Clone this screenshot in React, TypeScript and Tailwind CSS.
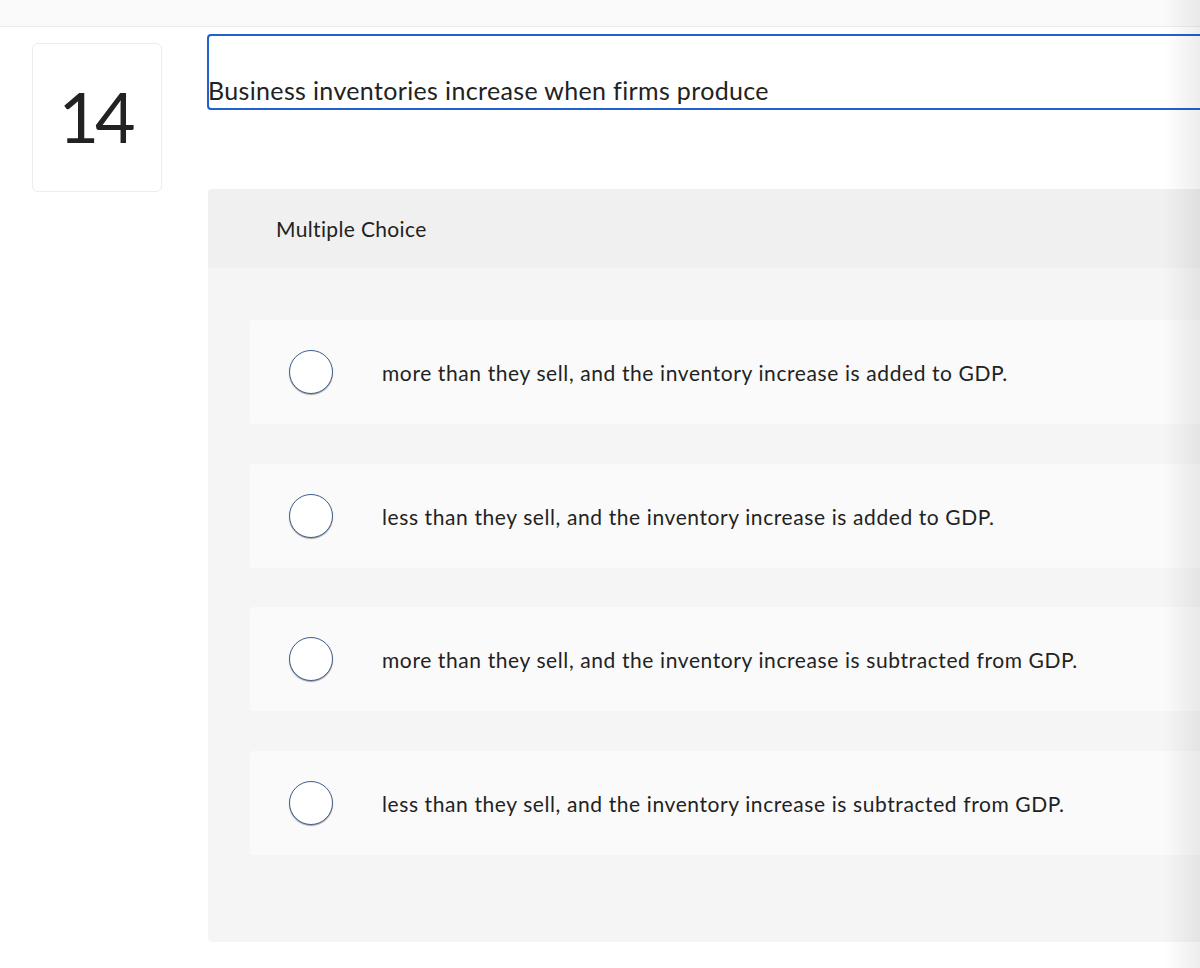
import React from "react";

const options = [
  "more than they sell, and the inventory increase is added to GDP.",
  "less than they sell, and the inventory increase is added to GDP.",
  "more than they sell, and the inventory increase is subtracted from GDP.",
  "less than they sell, and the inventory increase is subtracted from GDP.",
];

export default function App() {
  return (
    <div
      className="relative w-[1200px] h-[968px] overflow-hidden bg-white text-[#222]"
      style={{ fontFamily: "Lato, 'Open Sans', sans-serif" }}
    >
      <div className="h-[27px] bg-[#fafafa] border-b border-[#ececec]" />
      <div className="flex pt-[7px]">
        <div className="w-[208px] shrink-0 pl-[32px] pt-[9px]">
          <div className="w-[130px] h-[149px] rounded-[6px] border border-[#ececec] flex items-center justify-center">
            <span className="text-[70px] leading-none tracking-[-4px] text-[#222] font-normal -mt-[4px] -ml-[4px]">14</span>
          </div>
        </div>
        <div className="flex-1 -ml-[1px]">
          <div className="h-[76px] border-2 border-r-0 border-[#2160cf] rounded-l-[4px] flex items-end pb-[3px]">
            <span className="text-[25px] leading-[30px] tracking-[0.35px] text-[#222] -ml-[1px]">Business inventories increase when firms produce</span>
          </div>
          <div className="mt-[79px] ml-[1px] rounded-l-[4px] overflow-hidden bg-[#f5f5f5] h-[753px]">
            <div className="h-[79px] bg-[#f0f0f0] flex items-center pl-[68px]">
              <span className="text-[21px] tracking-[0.35px] text-[#222]">Multiple Choice</span>
            </div>
            <div className="pl-[42px] pt-[52px] flex flex-col gap-[39.5px]">
              {options.map((o) => (
                <div key={o} className="h-[104px] bg-[#fafafa] rounded-l-[4px] flex items-center">
                  <div className="ml-[39px] w-[44px] h-[44px] rounded-full border border-[#3d5f8f] bg-white shadow-[0_1px_1px_rgba(0,0,0,0.35)] shrink-0" />
                  <span className="ml-[49px] mt-[2px] text-[21px] tracking-[0.6px] text-[#222]">{o}</span>
                </div>
              ))}
            </div>
          </div>
        </div>
      </div>
      <div className="absolute top-0 right-0 h-full w-[36px] bg-gradient-to-r from-transparent to-[rgba(0,0,0,0.07)] pointer-events-none" />
    </div>
  );
}
